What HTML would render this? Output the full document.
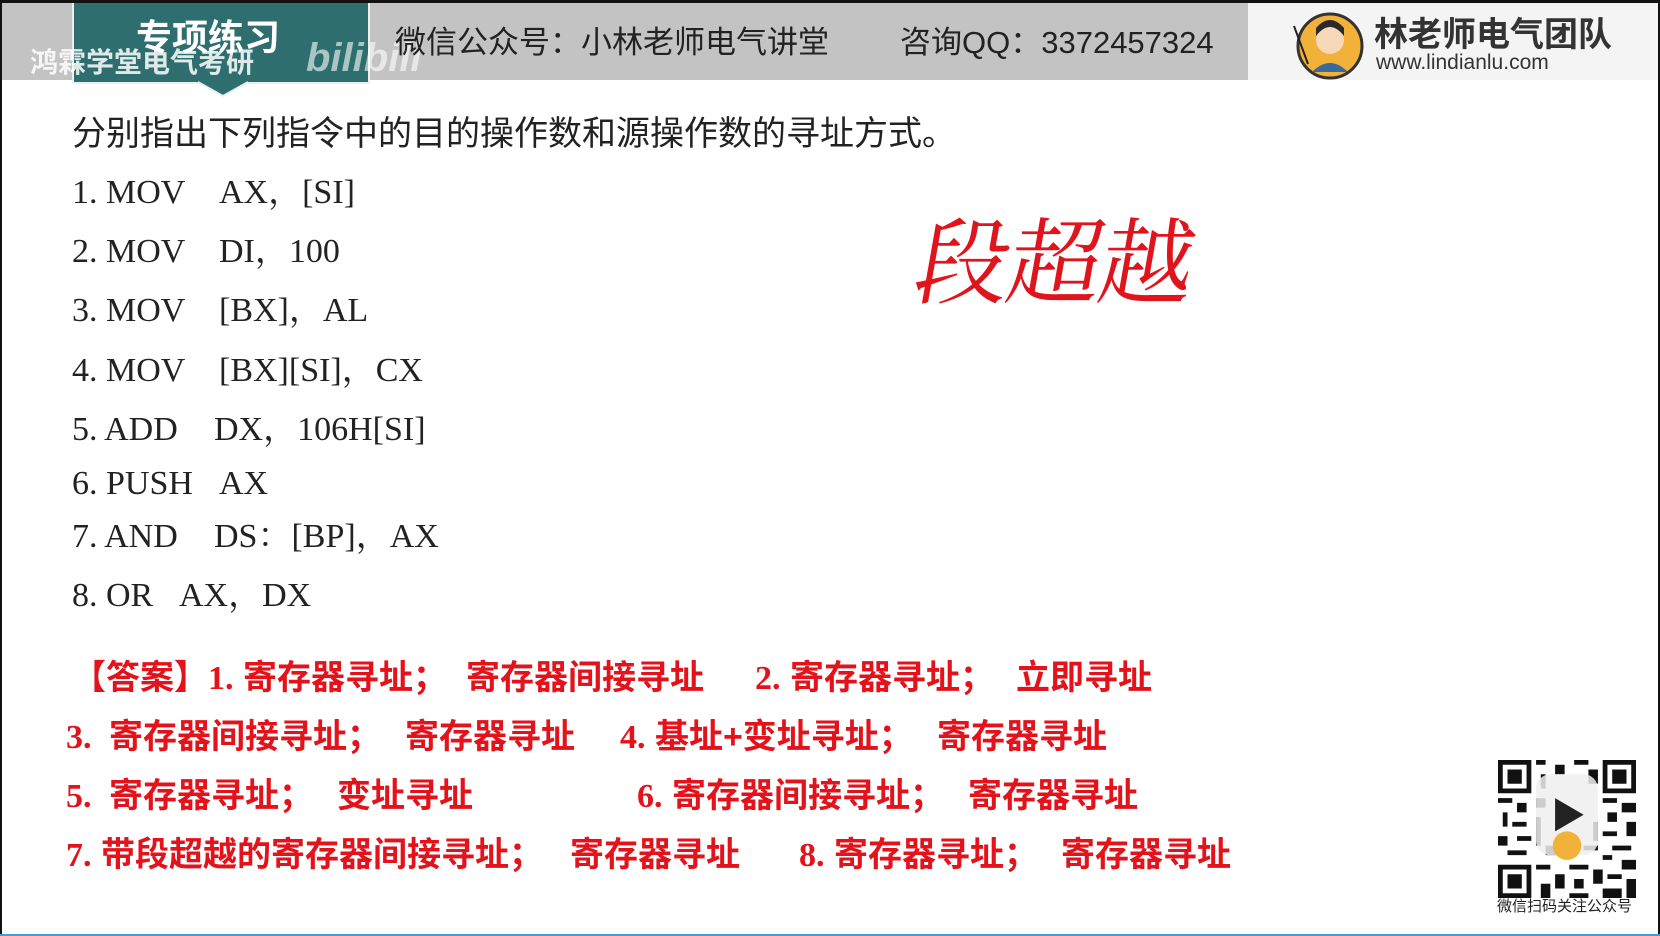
<!DOCTYPE html>
<html><head><meta charset="utf-8">
<style>
*{margin:0;padding:0;box-sizing:border-box}
body{width:1660px;height:936px;background:#fff;position:relative;overflow:hidden;font-family:"Liberation Sans","Noto Sans CJK SC",sans-serif}
.a{position:absolute;white-space:nowrap}
.hdr{position:absolute;left:0;top:0;width:1660px;height:3px;background:#111}
.gray{position:absolute;left:2px;top:3px;width:1246px;height:77px;background:#c3c3c3}
.wr{position:absolute;left:1248px;top:3px;width:410px;height:77px;background:#f4f4f4}
.teal{position:absolute;left:72px;top:3px;width:298px;height:81px;background:#2e6e6e;border:2px solid #e8f0f0;border-top:none}
.q{font-family:"Liberation Sans","Noto Sans CJK SC",sans-serif;font-size:34px;color:#222;line-height:40px}
.s{font-family:"Liberation Serif","Noto Serif CJK SC",serif;font-size:34px;color:#222;line-height:34px}
.r{color:#e3121b;font-weight:bold;font-size:34px;line-height:34px;font-family:"Liberation Sans","Noto Sans CJK SC",sans-serif}
.r b{font-family:"Liberation Serif",serif}
</style></head><body>
<div class="hdr"></div>
<div class="a" style="left:0;top:0;width:2px;height:936px;background:#111"></div>
<div class="a" style="left:1658px;top:0;width:2px;height:936px;background:#111"></div>
<div class="a" style="left:0;top:934px;width:1660px;height:2px;background:#3fa0d8"></div>
<div class="gray"></div><div class="wr"></div>
<div class="teal"></div>
<svg class="a" style="left:196px;top:80px" width="54" height="18"><path d="M2 2 L27 16 L52 2" fill="#2e6e6e" stroke="#e8f0f0" stroke-width="2"/></svg>
<div class="a" style="left:136px;top:18px;font-size:36px;color:#fff;font-weight:bold;line-height:40px">专项练习</div>
<div class="a" style="left:30px;top:48px;font-size:28px;color:rgba(255,255,255,.85);line-height:30px;font-weight:bold">鸿霖学堂电气考研</div>
<div class="a" style="left:306px;top:38px;font-size:40px;color:rgba(255,255,255,.6);font-weight:bold;line-height:40px;font-style:italic">bilibili</div>
<div class="a" style="left:395px;top:25px;font-size:31px;color:#222;line-height:36px">微信公众号：小林老师电气讲堂</div>
<div class="a" style="left:900px;top:25px;font-size:31px;color:#222;line-height:36px">咨询QQ：3372457324</div>
<svg class="a" style="left:1290px;top:6px" width="76" height="74"><circle cx="40" cy="40" r="32" fill="#f2b23a" stroke="#333" stroke-width="3"/><path d="M22 66 Q40 48 58 66" fill="#3a6a9a"/><circle cx="40" cy="34" r="14" fill="#f8d8b8"/><path d="M26 30 Q40 12 54 30 L54 22 Q40 6 26 22Z" fill="#2a2a2a"/><line x1="4" y1="20" x2="18" y2="58" stroke="#222" stroke-width="2"/></svg>
<div class="a" style="left:1374px;top:16px;font-size:34px;color:#333;line-height:38px;font-weight:bold">林老师电气团队</div>
<div class="a" style="left:1376px;top:51px;font-size:21px;color:#333;line-height:24px">www.lindianlu.com</div>

<div class="a q" style="left:72px;top:114px">分别指出下列指令中的目的操作数和源操作数的寻址方式。</div>
<div class="a s" style="left:72px;top:176px">1. MOV</div><div class="a s" style="left:219px;top:176px">AX，[SI]</div>
<div class="a s" style="left:72px;top:235px">2. MOV</div><div class="a s" style="left:219px;top:235px">DI，100</div>
<div class="a s" style="left:72px;top:294px">3. MOV</div><div class="a s" style="left:219px;top:294px">[BX]，AL</div>
<div class="a s" style="left:72px;top:354px">4. MOV</div><div class="a s" style="left:219px;top:354px">[BX][SI]，CX</div>
<div class="a s" style="left:72px;top:413px">5. ADD</div><div class="a s" style="left:214px;top:413px">DX，106H[SI]</div>
<div class="a s" style="left:72px;top:467px">6. PUSH</div><div class="a s" style="left:219px;top:467px">AX</div>
<div class="a s" style="left:72px;top:520px">7. AND</div><div class="a s" style="left:214px;top:520px">DS：[BP]，AX</div>
<div class="a s" style="left:72px;top:579px">8. OR</div><div class="a s" style="left:179px;top:579px">AX，DX</div>

<div class="a" style="left:918px;top:206px;font-size:94px;line-height:100px;color:#e0141c;font-family:'Noto Serif CJK SC',serif;font-weight:normal;letter-spacing:-2px;transform:skewX(-10deg)">段超越</div>

<div class="a r" style="left:72px;top:661px">【答案】<b>1.</b> 寄存器寻址；</div>
<div class="a r" style="left:466px;top:661px">寄存器间接寻址</div>
<div class="a r" style="left:755px;top:661px"><b>2.</b> 寄存器寻址；</div>
<div class="a r" style="left:1016px;top:661px">立即寻址</div>
<div class="a r" style="left:66px;top:720px"><b>3.</b></div><div class="a r" style="left:109px;top:720px">寄存器间接寻址；</div>
<div class="a r" style="left:405px;top:720px">寄存器寻址</div>
<div class="a r" style="left:620px;top:720px"><b>4.</b> 基址+变址寻址；</div>
<div class="a r" style="left:937px;top:720px">寄存器寻址</div>
<div class="a r" style="left:66px;top:779px"><b>5.</b></div><div class="a r" style="left:109px;top:779px">寄存器寻址；</div>
<div class="a r" style="left:337px;top:779px">变址寻址</div>
<div class="a r" style="left:637px;top:779px"><b>6.</b> 寄存器间接寻址；</div>
<div class="a r" style="left:968px;top:779px">寄存器寻址</div>
<div class="a r" style="left:66px;top:838px"><b>7.</b> 带段超越的寄存器间接寻址；</div>
<div class="a r" style="left:570px;top:838px">寄存器寻址</div>
<div class="a r" style="left:799px;top:838px"><b>8.</b> 寄存器寻址；</div>
<div class="a r" style="left:1061px;top:838px">寄存器寻址</div>

<svg class="a" style="left:1498px;top:760px" width="138" height="138" viewBox="0 0 29 29">
<g fill="#111">
<path d="M0 0h7v7h-7zM1 1v5h5v-5zM2 2h3v3h-3z" fill-rule="evenodd"/>
<path d="M22 0h7v7h-7zM23 1v5h5v-5zM24 2h3v3h-3z" fill-rule="evenodd"/>
<path d="M0 22h7v7h-7zM1 23v5h5v-5zM2 24h3v3h-3z" fill-rule="evenodd"/>
<path d="M8 0h2v1h-2zM12 1h2v2h-2zM16 0h3v1h-3zM9 3h1v3h-1zM19 2h2v3h-2zM0 8h3v1h-3zM4 9h2v2h-2zM1 11h1v3h-1zM3 13h3v1h-3zM0 16h2v2h-2zM4 16h3v1h-3zM2 19h4v1h-4zM8 8h2v2h-2zM22 8h3v1h-3zM26 9h3v2h-3zM23 11h2v2h-2zM27 13h2v3h-2zM22 15h3v1h-3zM24 18h4v1h-4zM22 20h2v1h-2zM26 21h3v2h-3zM8 22h3v1h-3zM12 24h2v3h-2zM9 26h2v3h-2zM15 22h4v1h-4zM16 25h2v2h-2zM20 23h2v3h-2zM23 24h3v1h-3zM27 25h2v4h-2zM22 27h4v2h-4zM15 28h4v1h-4zM8 12h1v6h-1zM10 18h3v2h-3zM18 18h3v1h-3zM20 13h1v4h-1z"/>
</g>
<rect x="8" y="3" width="13" height="17" rx="3" fill="#eee" opacity=".85"/>
<path d="M12 8l6 3.5-6 3.5z" fill="#222"/>
<circle cx="14.5" cy="18" r="3" fill="#f2b23a"/>
</svg>
<div class="a" style="left:1497px;top:898px;font-size:15px;color:#222;line-height:18px">微信扫码关注公众号</div>
</body></html>
